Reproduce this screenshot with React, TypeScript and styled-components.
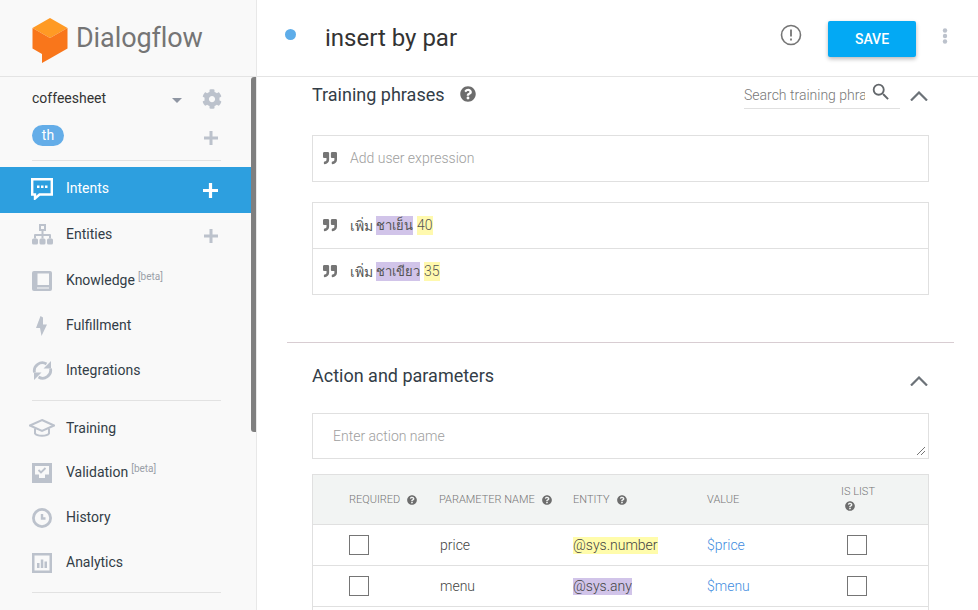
import styled, { createGlobalStyle } from "styled-components";
import { FaCog, FaQuestionCircle, FaQuoteRight } from "react-icons/fa";
import { MdSearch } from "react-icons/md";

const GlobalStyle = createGlobalStyle`
  html, body {
    margin: 0;
    height: 100%;
    overflow: hidden;
    background: #fff;
    font-family: Roboto, "Noto Sans", sans-serif;
  }
  * { box-sizing: border-box; }
`;

const Page = styled.div`
  display: flex;
  width: 100%;
  height: 610px;
  overflow: hidden;
`;

const Sidebar = styled.aside`
  position: relative;
  flex: 0 0 257px;
  height: 610px;
  background: #f9f9f9;
  border-right: 1px solid #e8e8e8;
  overflow: hidden;
`;

const ScrollThumb = styled.div`
  position: absolute;
  top: 77px;
  right: 0;
  width: 5px;
  height: 355px;
  background: #7f7f7f;
  border-radius: 3px 0 0 3px;
`;

const LogoBar = styled.div`
  display: flex;
  align-items: center;
  gap: 8px;
  height: 77px;
  padding: 0 0 1px 32px;
  border-bottom: 1px solid #e4e4e4;
`;

const LogoImage = styled.svg`
  display: block;
  margin-top: 5px;
`;

const LogoText = styled.span`
  font-size: 27px;
  color: #757575;
  letter-spacing: -0.1px;
`;

const AgentRow = styled.div`
  display: flex;
  align-items: center;
  height: 42px;
  padding: 0 34px 0 32px;
  font-size: 14px;
  color: #333;
`;

const AgentName = styled.span`
  flex: 1;
`;

const Caret = styled.span`
  width: 0;
  height: 0;
  margin-right: 20px;
  margin-top: 5px;
  border-left: 5px solid transparent;
  border-right: 5px solid transparent;
  border-top: 5px solid #8f96a3;
`;

const GearSlot = styled.span`
  display: flex;
  margin-top: 2px;
`;

const LangRow = styled.div`
  display: flex;
  align-items: center;
  justify-content: space-between;
  height: 33px;
  padding: 0 38px 0 32px;
`;

const LangPill = styled.span`
  width: 32px;
  height: 21px;
  line-height: 20px;
  text-align: center;
  border-radius: 11px;
  background: #64ade8;
  color: #fff;
  font-size: 14px;
`;

const LangPlus = styled.span`
  display: flex;
  margin-top: 4px;
`;

const Divider = styled.div<{ $top?: number; $bottom?: number }>`
  height: 1px;
  margin: ${(p) => p.$top ?? 0}px 35px ${(p) => p.$bottom ?? 0}px 32px;
  background: #e2e2e2;
`;

const NavItem = styled.div<{ $active?: boolean; $tall?: boolean; $lift?: boolean }>`
  display: flex;
  align-items: center;
  height: ${(p) => (p.$tall ? 46 : 45)}px;
  padding: 0 0 ${(p) => (p.$lift ? 2 : 0)}px 32px;
  font-size: 14px;
  color: ${(p) => (p.$active ? "#fff" : "#333d47")};
  background: ${(p) => (p.$active ? "#2d9fdf" : "transparent")};
`;

const NavIcon = styled.span`
  display: flex;
  align-items: center;
  justify-content: center;
  flex: 0 0 20px;
  min-width: 0;
  height: 22px;
  margin-right: 14px;

  svg {
    flex: none;
  }
`;

const NavLabel = styled.span<{ $shift?: number }>`
  flex: 1;
  position: relative;
  top: ${(p) => p.$shift ?? -1}px;
`;

const Beta = styled.sup`
  margin-left: 3px;
  font-size: 10px;
  color: #9aa0a8;
  line-height: 0;
  vertical-align: 5px;
`;

const PlusSlot = styled.span`
  display: flex;
  margin: 3px 38px 0 0;
`;

const Main = styled.main`
  flex: 1;
  min-width: 0;
  height: 610px;
  display: flex;
  flex-direction: column;
  overflow: hidden;
`;

const Header = styled.header`
  display: flex;
  align-items: center;
  flex: 0 0 77px;
  padding: 0 30px 5px 28px;
  border-bottom: 1px solid #e4e4e4;
`;

const StatusDot = styled.span`
  width: 11px;
  height: 11px;
  margin: 0 29px 2px 0;
  border-radius: 50%;
  background: #5eade9;
`;

const Title = styled.h1`
  flex: 1;
  margin: 4px 0 0;
  font-size: 24px;
  font-weight: 400;
  color: #333;
`;

const AlertSlot = styled.span`
  display: flex;
  margin-bottom: 2px;
`;

const SaveButton = styled.button`
  width: 88px;
  height: 36px;
  margin: 7px 26px 0 26px;
  border: 0;
  border-radius: 2px;
  background: #03a9f4;
  color: #fff;
  font: 500 14px Roboto, sans-serif;
  box-shadow: 0 2px 4px rgba(0, 0, 0, 0.28);
`;

const Content = styled.div`
  flex: 1;
  padding: 0 49px 0 55px;
  overflow: hidden;
`;

const SectionHead = styled.div<{ $height: number }>`
  display: flex;
  align-items: center;
  height: ${(p) => p.$height}px;
`;

const SectionTitle = styled.h2`
  margin: 0;
  font-size: 18px;
  font-weight: 400;
  color: #333d47;
`;

const HelpSlot = styled.span`
  display: flex;
  margin-left: 15px;
  color: #6d6d6d;
`;

const Spacer = styled.span`
  flex: 1;
`;

const SearchBox = styled.div`
  display: flex;
  align-items: flex-start;
  width: 156px;
  height: 30px;
  padding-top: 3px;
  margin-right: 10px;
  border-bottom: 1px solid #e0e0e0;
`;

const SearchInput = styled.input`
  width: 121px;
  height: 26px;
  padding: 0;
  border: 0;
  outline: 0;
  background: transparent;
  font: 300 14px Roboto, sans-serif;
  &::placeholder { color: #777; opacity: 1; }
`;

const SearchIcon = styled.span`
  display: flex;
  margin: -1px 0 0 5px;
  color: #63676b;
`;

const Chevron = styled.svg<{ $drop: number }>`
  display: block;
  flex: none;
  margin: ${(p) => p.$drop}px 1px 0 0;
`;

const PhraseList = styled.div<{ $gap?: number }>`
  margin-top: ${(p) => p.$gap ?? 0}px;
  border: 1px solid #e0e0e0;
  background: #fff;
`;

const PhraseRow = styled.div`
  display: flex;
  align-items: center;
  height: 45px;
  padding: 0 0 2px 10px;
  font-size: 14px;
  color: #555;
  & + & {
    height: 46px;
    border-top: 1px solid #e0e0e0;
  }
`;

const QuoteSlot = styled.span`
  display: flex;
  margin-right: 13px;
  color: #757575;
`;

const Placeholder = styled.span`
  font-weight: 300;
  color: #9e9e9e;
`;

const ThaiText = styled.span`
  display: flex;
  align-items: center;
  gap: 3px;
  margin-top: 2px;
`;

const Mark = styled.span<{ $kind: "purple" | "yellow" }>`
  display: inline-block;
  line-height: 19px;
  margin-left: ${(p) => (p.$kind === "yellow" ? 1 : 0)}px;
  font-size: ${(p) => (p.$kind === "purple" ? 13 : 14)}px;
  font-weight: ${(p) => (p.$kind === "yellow" ? 300 : 400)};
  background: ${(p) => (p.$kind === "purple" ? "#d1c4e9" : "#fff9ae")};
`;

const SectionRule = styled.hr`
  height: 1px;
  margin: 47px -25px 0;
  border: 0;
  background: #d8cdd2;
`;

const ActionInput = styled.textarea`
  display: block;
  width: 100%;
  height: 46px;
  margin-top: 6px;
  padding: 14px 20px 0;
  border: 1px solid #e0e0e0;
  outline: 0;
  font: 300 14px Roboto, sans-serif;
  &::placeholder { color: #9e9e9e; opacity: 1; }
  &::-webkit-resizer {
    background: linear-gradient(
        135deg,
        transparent 0 65%,
        #777 65% 69%,
        transparent 69% 81%,
        #777 81% 85%,
        transparent 85%
      )
      0 0 / 12px 12px no-repeat;
  }
`;

const ParamTable = styled.div`
  margin-top: 15px;
  border: 1px solid #e0e0e0;
  border-bottom: 0;
`;

const ParamRow = styled.div<{ $head?: boolean }>`
  display: grid;
  grid-template-columns: 90px 134px 134px 134px 1fr;
  align-items: center;
  height: ${(p) => (p.$head ? 50 : 41)}px;
  padding-left: 36px;
  border-bottom: 1px solid #e0e0e0;
  background: ${(p) => (p.$head ? "#f2f4f3" : "#fff")};
  font-size: 14px;
  font-weight: 300;
  color: #444;
`;

const HeadCell = styled.span`
  display: flex;
  align-items: center;
  gap: 7px;
  font-size: 11px;
  font-weight: 300;
  color: #777;
`;

const ListHead = styled(HeadCell)`
  flex-direction: column;
  align-items: flex-start;
  gap: 3px;
  padding-bottom: 3px;
`;

const ListHelp = styled.span`
  display: flex;
  margin-left: 4px;
  color: #6d6d6d;
`;

const TinyHelp = styled.span`
  display: flex;
  color: #6d6d6d;
`;

const ParamName = styled.span`
  margin-left: 1px;
`;

const CheckBox = styled.span<{ $inset?: boolean }>`
  display: block;
  width: 20px;
  height: 20px;
  margin-left: ${(p) => (p.$inset ? 6 : 0)}px;
  border: 1px solid #757575;
  background: #fff;
`;

const EntityMark = styled.span<{ $kind: "purple" | "yellow" }>`
  justify-self: start;
  line-height: 17px;
  background: ${(p) => (p.$kind === "purple" ? "#d1c4e9" : "#fffcab")};
`;

const ValueLink = styled.span`
  color: #3f8de0;
`;

const ICON = "#bcc2cc";

const Plus = ({ color = ICON, size = 14 }: { color?: string; size?: number }) => (
  <svg width={size} height={size} viewBox="0 0 14 14">
    <path d="M5.5 0h3v5.5H14v3H8.5V14h-3V8.5H0v-3h5.5z" fill={color} />
  </svg>
);

const LogoMark = () => (
  <LogoImage width="36" height="46" viewBox="0 0 36 46">
    <path d="M18 1 35.5 11 18 21 .5 11z" fill="#ff9a24" />
    <path d="M.5 11 18 21v20.5L10 46v-9L.5 31.5z" fill="#f9761b" />
    <path d="M35.5 11 18 21v20.5l17.500-10z" fill="#f9761b" />
  </LogoImage>
);

const ChatIcon = () => (
  <svg width="22" height="22" viewBox="0 0 22 22">
    <path d="M1.200 1.200h19.600v15.300H8.500L4 20.500v-4H1.200z" fill="none" stroke="#fff" strokeWidth="2.400" />
    <path d="M6 7.500h2.500V10H6zM10 7.500h2.500V10H10zM14 7.500h2.500V10H14z" fill="#fff" />
  </svg>
);

const SitemapIcon = () => (
  <svg width="21" height="21" viewBox="0 0 21 21">
    <path d="M7 0h7v7h-2.500v3h6.500a1 1 0 0 1 1 1v3.500h-2V12h-5.500v2.500h-2V12H4v2.500H2V11a1 1 0 0 1 1-1h6.500V7H7zm2 2v3h3V2z" fill={ICON} fillRule="evenodd" />
    <rect x="0" y="14.500" width="6" height="6" rx="1.500" fill={ICON} />
    <rect x="7.500" y="14.500" width="6" height="6" rx="1.500" fill={ICON} />
    <rect x="15" y="14.500" width="6" height="6" rx="1.500" fill={ICON} />
  </svg>
);

const BookIcon = () => (
  <svg width="20" height="20" viewBox="0 0 20 20">
    <path d="M2 0h16a2 2 0 0 1 2 2v16a2 2 0 0 1-2 2H2a2 2 0 0 1-2-2V2a2 2 0 0 1 2-2z" fill={ICON} />
    <path d="M5.500 2.500h11.500v11.500H5.500zM5 16.500h12v1H5z" fill="#f9f9f9" />
  </svg>
);

const BoltIcon = () => (
  <svg width="12" height="20" viewBox="0 0 12 20">
    <path d="M4.500 0 0 12h4l1.500 8L11 8.500H7L7 1.500z" fill={ICON} />
  </svg>
);

const SyncIcon = () => (
  <svg width="21" height="21" viewBox="0 0 21 21" fill="none" stroke={ICON} strokeWidth="2.800">
    <path d="M2.500 12.500A8 8 0 0 1 14.500 4" />
    <path d="M18.500 8.500A8 8 0 0 1 6.500 17" />
    <path d="M11.500 8.500H19V1zM9.500 12.500H2V20z" fill={ICON} stroke="none" />
  </svg>
);

const CapIcon = () => (
  <svg width="26" height="20" viewBox="0 0 26 20" fill="none" stroke={ICON} strokeWidth="2">
    <path d="M13 2 25 7.500 13 13 1 7.500z" />
    <path d="M6 10.500v5c2 3 12 3 14 0v-5" />
  </svg>
);

const ValidationIcon = () => (
  <svg width="20" height="20" viewBox="0 0 20 20">
    <path d="M0 0h20v20H0z" fill={ICON} />
    <path d="M3 3h14v8.500h-4v3.500H7v-3.500H3z" fill="#f9f9f9" />
    <path d="m6.500 7 2.500 2.500 4.500-4.500" fill="none" stroke={ICON} strokeWidth="1.800" />
  </svg>
);

const ClockIcon = () => (
  <svg width="20" height="20" viewBox="0 0 20 20" fill="none" stroke={ICON}>
    <circle cx="10" cy="10" r="8.600" strokeWidth="2.800" />
    <path d="M10 6v4.500h3.500" strokeWidth="2.400" />
  </svg>
);

const ChartIcon = () => (
  <svg width="20" height="20" viewBox="0 0 20 20">
    <path d="M0 0h20v20H0z" fill={ICON} />
    <path d="M2.500 2.500h15v15h-15z" fill="#f9f9f9" />
    <path d="M5 10h2.500v5H5zM8.800 6.500h2.500V15H8.800zM12.500 8.500H15V15h-2.500z" fill={ICON} />
  </svg>
);

const AlertIcon = () => (
  <svg width="22" height="22" viewBox="0 0 22 22" fill="none" stroke="#757575">
    <circle cx="11" cy="11" r="9.500" strokeWidth="1.600" />
    <path d="M11 5.500v7M11 14.500v2" strokeWidth="1.800" />
  </svg>
);

const MoreIcon = () => (
  <svg width="6" height="16" viewBox="0 0 6 16">
    <circle cx="3" cy="2.500" r="2.200" fill={ICON} />
    <circle cx="3" cy="8" r="2.200" fill={ICON} />
    <circle cx="3" cy="13.500" r="2.200" fill={ICON} />
  </svg>
);

const Up = ({ drop }: { drop: number }) => (
  <Chevron $drop={drop} width="18" height="10" viewBox="0 0 18 10">
    <path d="M1 9.500 9 1.500l8 8" fill="none" stroke="#6c7278" strokeWidth="2.200" />
  </Chevron>
);

const App = () => {
  return (
    <Page>
      <GlobalStyle />
      <Sidebar>
        <LogoBar>
          <LogoMark />
          <LogoText>Dialogflow</LogoText>
        </LogoBar>
        <AgentRow>
          <AgentName>coffeesheet</AgentName>
          <Caret />
          <GearSlot><FaCog size={20} color={ICON} /></GearSlot>
        </AgentRow>
        <LangRow>
          <LangPill>th</LangPill>
          <LangPlus><Plus /></LangPlus>
        </LangRow>
        <Divider $top={8} $bottom={6} />
        <NavItem $active $tall $lift>
          <NavIcon><ChatIcon /></NavIcon>
          <NavLabel>Intents</NavLabel>
          <PlusSlot><Plus color="#fff" size={15} /></PlusSlot>
        </NavItem>
        <NavItem $lift>
          <NavIcon><SitemapIcon /></NavIcon>
          <NavLabel>Entities</NavLabel>
          <PlusSlot><Plus /></PlusSlot>
        </NavItem>
        <NavItem>
          <NavIcon><BookIcon /></NavIcon>
          <NavLabel>Knowledge<Beta>[beta]</Beta></NavLabel>
        </NavItem>
        <NavItem>
          <NavIcon><BoltIcon /></NavIcon>
          <NavLabel>Fulfillment</NavLabel>
        </NavItem>
        <NavItem>
          <NavIcon><SyncIcon /></NavIcon>
          <NavLabel>Integrations</NavLabel>
        </NavItem>
        <Divider $top={7} $bottom={4} />
        <NavItem>
          <NavIcon><CapIcon /></NavIcon>
          <NavLabel $shift={0}>Training</NavLabel>
        </NavItem>
        <NavItem>
          <NavIcon><ValidationIcon /></NavIcon>
          <NavLabel>Validation<Beta>[beta]</Beta></NavLabel>
        </NavItem>
        <NavItem>
          <NavIcon><ClockIcon /></NavIcon>
          <NavLabel>History</NavLabel>
        </NavItem>
        <NavItem>
          <NavIcon><ChartIcon /></NavIcon>
          <NavLabel>Analytics</NavLabel>
        </NavItem>
        <Divider $top={7} />
        <ScrollThumb />
      </Sidebar>
      <Main>
        <Header>
          <StatusDot />
          <Title>insert by par</Title>
          <AlertSlot><AlertIcon /></AlertSlot>
          <SaveButton>SAVE</SaveButton>
          <MoreIcon />
        </Header>
        <Content>
          <SectionHead $height={34}>
            <SectionTitle>Training phrases</SectionTitle>
            <HelpSlot><FaQuestionCircle size={16} /></HelpSlot>
            <Spacer />
            <SearchBox>
              <SearchInput placeholder="Search training phrases" />
              <SearchIcon><MdSearch size={22} /></SearchIcon>
            </SearchBox>
            <Up drop={4} />
          </SectionHead>
          <PhraseList $gap={24}>
            <PhraseRow>
              <QuoteSlot><FaQuoteRight size={14} /></QuoteSlot>
              <Placeholder>Add user expression</Placeholder>
            </PhraseRow>
          </PhraseList>
          <PhraseList $gap={20}>
            <PhraseRow>
              <QuoteSlot><FaQuoteRight size={14} /></QuoteSlot>
              <ThaiText>
                เพิ่ม <Mark $kind="purple">ชาเย็น</Mark> <Mark $kind="yellow">40</Mark>
              </ThaiText>
            </PhraseRow>
            <PhraseRow>
              <QuoteSlot><FaQuoteRight size={14} /></QuoteSlot>
              <ThaiText>
                เพิ่ม <Mark $kind="purple">ชาเขียว</Mark> <Mark $kind="yellow">35</Mark>
              </ThaiText>
            </PhraseRow>
          </PhraseList>
          <SectionRule />
          <SectionHead $height={64}>
            <SectionTitle>Action and parameters</SectionTitle>
            <Spacer />
            <Up drop={12} />
          </SectionHead>
          <ActionInput placeholder="Enter action name" />
          <ParamTable>
            <ParamRow $head>
              <HeadCell>REQUIRED <TinyHelp><FaQuestionCircle size={10} /></TinyHelp></HeadCell>
              <HeadCell>PARAMETER NAME <TinyHelp><FaQuestionCircle size={10} /></TinyHelp></HeadCell>
              <HeadCell>ENTITY <TinyHelp><FaQuestionCircle size={10} /></TinyHelp></HeadCell>
              <HeadCell>VALUE</HeadCell>
              <ListHead>IS LIST <ListHelp><FaQuestionCircle size={10} /></ListHelp></ListHead>
            </ParamRow>
            <ParamRow>
              <CheckBox />
              <ParamName>price</ParamName>
              <EntityMark $kind="yellow">@sys.number</EntityMark>
              <ValueLink>$price</ValueLink>
              <CheckBox $inset />
            </ParamRow>
            <ParamRow>
              <CheckBox />
              <ParamName>menu</ParamName>
              <EntityMark $kind="purple">@sys.any</EntityMark>
              <ValueLink>$menu</ValueLink>
              <CheckBox $inset />
            </ParamRow>
            <ParamRow />
          </ParamTable>
        </Content>
      </Main>
    </Page>
  );
};

export default App;
